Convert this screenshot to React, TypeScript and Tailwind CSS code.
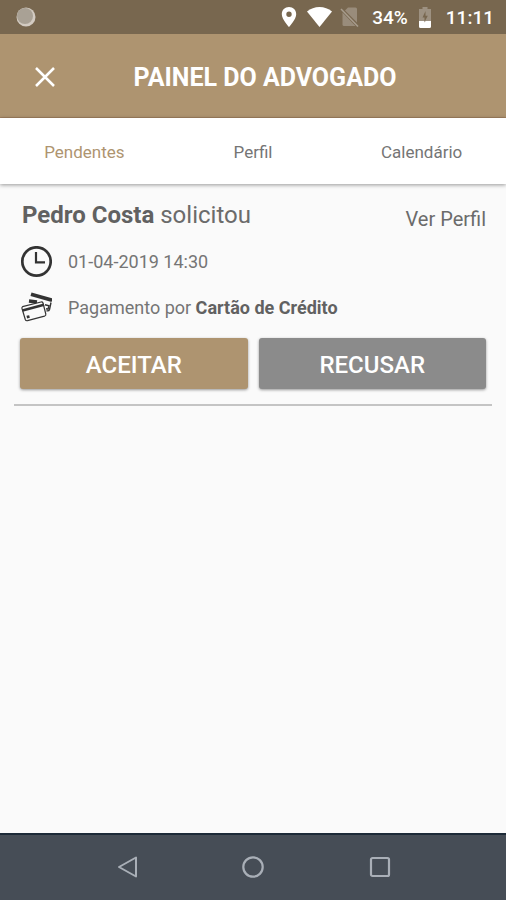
import React, { useState } from "react";

const tabs = ["Pendentes", "Perfil", "Calendário"];

function StatusBar() {
  return (
    <div className="flex h-[34px] shrink-0 items-center justify-between bg-[#78674f] pl-4 pr-3 text-white">
      <svg width="20" height="20" viewBox="0 0 20 20">
        <circle cx="10" cy="10" r="9.5" fill="#d3cbc2" />
        <circle cx="9" cy="9" r="8" fill="#a9a195" />
      </svg>

      <div className="flex items-center">
        <svg width="16" height="20" viewBox="0 0 16 20" fill="currentColor">
          <path
            fillRule="evenodd"
            d="M8 0C3.9 0 .8 3.1.8 7.2.8 12.300 8 20 8 20s7.200-7.700 7.200-12.800C15.200 3.100 12.100 0 8 0Zm0 4.500a2.700 2.700 0 1 1 0 5.400 2.700 2.700 0 0 1 0-5.400Z"
          />
        </svg>
        <svg className="ml-2.5" width="25" height="20" viewBox="0 0 25 20" fill="currentColor">
          <path d="M0 4.500C3.600 1.700 7.800 0 12.500 0S21.400 1.700 25 4.500L12.500 20Z" />
        </svg>
        <svg className="ml-2" width="20" height="20" viewBox="0 0 20 20">
          <path d="M8 .5H15.500Q17 .5 17 2V15.500L5 3.500Z" fill="#998c7b" />
          <path d="M2.500 5.500 15.500 19H4Q2.500 19 2.500 17.500Z" fill="#998c7b" />
          <path d="M1 2 18 19.500" stroke="#a89d8e" strokeWidth="1.500" />
        </svg>
        <span className="ml-3 pt-0.5 text-[19px] font-medium leading-6">34%</span>
        <svg className="ml-2.5" width="14" height="21" viewBox="0 0 14 21">
          <path d="M4.500 0h5v2H13v12H1V2h3.500Z" fill="#9d9181" />
          <path d="M7.500 4 4.500 10.500H6.500V15L9.800 8.800H7.500Z" fill="#78674f" />
          <path d="M1 14h5.500v1.500L7.500 14H13v5.500q0 1.500-1.500 1.500h-9Q1 21 1 19.500Z" fill="#fff" />
        </svg>
        <span className="ml-3.5 pt-0.5 text-[19px] font-medium leading-6">11:11</span>
      </div>
    </div>
  );
}

function ClockIcon() {
  return (
    <svg width="32" height="32" viewBox="0 0 32 32" fill="none" stroke="#333">
      <circle cx="16.500" cy="15.500" r="14.200" strokeWidth="2.700" />
      <path d="M16 6V16.300H25" strokeWidth="2.200" />
    </svg>
  );
}

function CardsIcon() {
  return (
    <svg width="32" height="32" viewBox="0 0 32 32" fill="none" stroke="#333">
      {/* back card */}
      <path d="M11 2.200 32 8.200" strokeWidth="3.600" />
      <path d="M9 9 17 10" strokeWidth="3.500" />
      <path d="M31 10.500 29.500 17.500Q29 19.300 26.500 18.800" strokeWidth="1.400" />
      <path d="M25 12.800 29 13.800 28 17.200 26 16.800" strokeWidth="1.400" />
      {/* front card */}
      <path
        d="M2.500 14.700 21 10Q22.500 9.700 23 11L25.800 22Q26.200 23.700 24.500 24.200L7.500 28.700Q5.800 29 5.300 27.500L2 16.500Q1.700 15.100 2.500 14.700Z"
        fill="#fafafa"
        strokeWidth="1.200"
      />
      <path d="M2.500 18.500 24 12.800" strokeWidth="2.600" />
      <path d="M6.800 25.200 9.500 24.500" strokeWidth="2.800" />
    </svg>
  );
}

function RequestCard() {
  return (
    <article className="mx-[14px] border-b-2 border-[#c4c4c4] px-1.5 pb-[15px]">
      <div className="flex items-center justify-between pl-0.5">
        <h2 className="text-[24px] leading-8 text-[#6b6b6b]">
          <strong className="font-bold text-[#616161]">Pedro Costa</strong> solicitou
        </h2>
        <a href="#perfil" className="pt-2 text-[20px] leading-6 text-[#6b6b6b]">
          Ver Perfil
        </a>
      </div>

      <div className="mt-[15px] flex items-center gap-4 text-[18px] leading-6 text-[#757575]">
        <ClockIcon />
        <span>01-04-2019 14:30</span>
      </div>
      <div className="mt-3.5 flex items-center gap-4 text-[18px] leading-6 text-[#757575]">
        <CardsIcon />
        <span>
          Pagamento por <strong className="font-bold text-[#616161]">Cartão de Crédito</strong>
        </span>
      </div>

      <div className="mt-3.5 grid grid-cols-2 gap-[11px] text-[24px] font-medium leading-8 text-white">
        <button className="h-[51px] rounded-[3px] bg-[#ae9470] pt-0.5 shadow-[0_1px_3px_rgba(0,0,0,0.4)]">
          ACEITAR
        </button>
        <button className="h-[51px] rounded-[3px] bg-[#8b8b8b] pt-0.5 shadow-[0_1px_3px_rgba(0,0,0,0.4)]">
          RECUSAR
        </button>
      </div>
    </article>
  );
}

export default function LawyerPanel() {
  const [activeTab, setActiveTab] = useState("Pendentes");

  return (
    <div className="flex min-h-screen flex-col bg-[#fafafa] font-['Roboto',sans-serif]">
      <StatusBar />

      <header className="flex h-[84px] shrink-0 items-center border-b border-[#a1805f] bg-[#ae9470] pl-6 pr-[42px] pt-0.5 text-white">
        <button aria-label="Fechar" className="flex h-10 w-[42px] items-center justify-center">
          <svg width="20" height="20" viewBox="0 0 20 20" stroke="currentColor" strokeWidth="2.500">
            <path d="M1 1 19 19M19 1 1 19" />
          </svg>
        </button>
        <h1 className="flex-1 pt-0.5 text-center text-[25px] font-bold leading-8">PAINEL DO ADVOGADO</h1>
      </header>

      <nav className="relative grid h-[66px] shrink-0 grid-cols-3 bg-white shadow-[0_1px_4px_rgba(0,0,0,0.4)]">
        {tabs.map((tab) => (
          <button
            key={tab}
            onClick={() => setActiveTab(tab)}
            className={`pt-0.5 text-[17px] leading-6 ${activeTab === tab ? "text-[#ae9470]" : "text-[#757575]"}`}
          >
            {tab}
          </button>
        ))}
      </nav>

      <main className="flex-1 pt-[15px]">
        <RequestCard />
      </main>

      {/* Android navigation */}
      <footer className="grid h-[67px] shrink-0 grid-cols-3 border-t-2 border-[#1d2a38] bg-[#464d56] px-[12.5%] pb-0.5 text-[#a9afb7]">
        <button aria-label="Voltar" className="flex items-center justify-center">
          <svg width="22" height="22" viewBox="0 0 22 22" fill="none" stroke="currentColor" strokeWidth="2">
            <path d="M20 1.500V20.500L3 11Z" strokeLinejoin="round" />
          </svg>
        </button>
        <button aria-label="Início" className="flex items-center justify-center">
          <svg width="22" height="22" viewBox="0 0 22 22" fill="none" stroke="currentColor" strokeWidth="2.200">
            <circle cx="11" cy="11" r="9.700" />
          </svg>
        </button>
        <button aria-label="Recentes" className="flex items-center justify-center">
          <svg width="22" height="22" viewBox="0 0 22 22" fill="none" stroke="currentColor" strokeWidth="2.200">
            <rect x="2" y="2" width="18" height="18" rx="1.500" />
          </svg>
        </button>
      </footer>
    </div>
  );
}
